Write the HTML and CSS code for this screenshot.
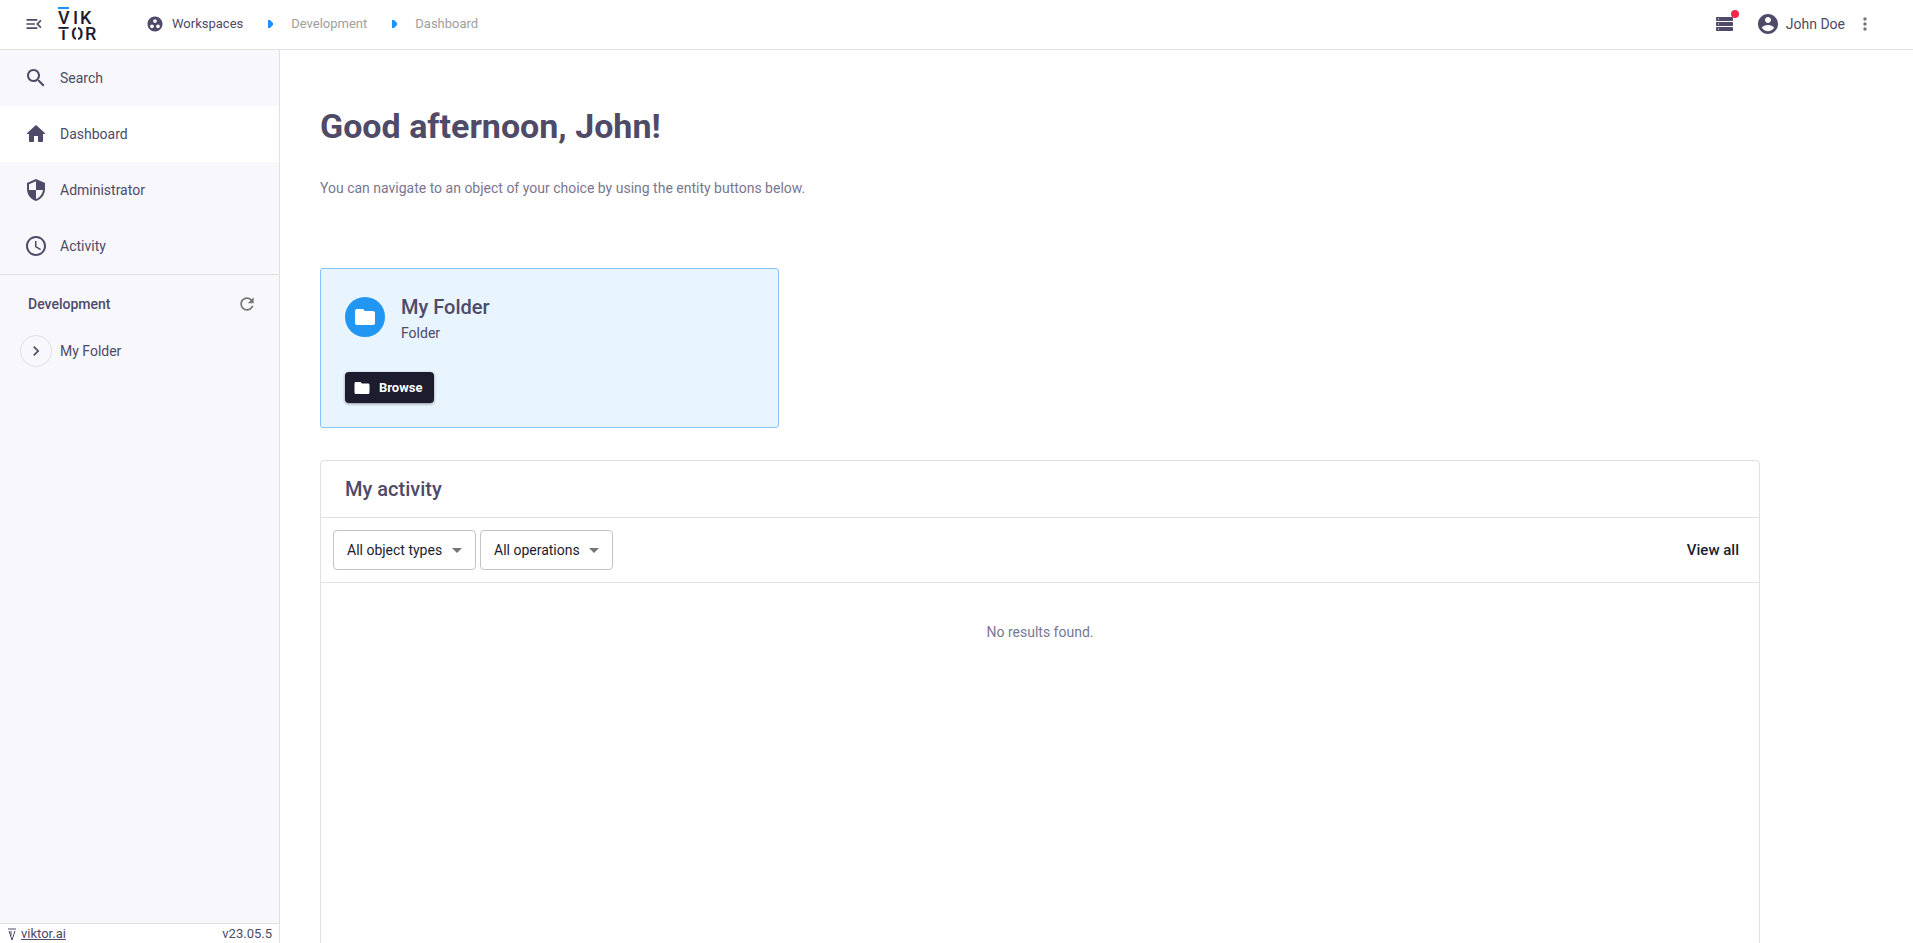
FILE: index.html
```html
<!DOCTYPE html>
<html lang="en">
<head>
  <meta charset="UTF-8">
  <meta name="viewport" content="width=device-width, initial-scale=1">
  <title>Dashboard - VIKTOR</title>
  <link rel="stylesheet" href="styles.css">
</head>
<body>
  <header class="topbar">
    <button type="button" class="icon-button menu-toggle" aria-label="Collapse menu">
      <svg width="20" height="20" viewBox="0 0 24 24"><path d="M3 18h13v-2H3v2zm0-5h10v-2H3v2zm0-7v2h13V6H3zm18 9.59L17.42 12 21 8.41 19.59 7l-5 5 5 5L21 15.59z"/></svg>
    </button>
    <a href="#" class="logo" aria-label="Viktor home">
      <svg width="40" height="36" viewBox="0 0 40 36">
        <rect class="logo-bar" x="0" y="1" width="11" height="2"/>
        <text><tspan x="0 15 22" y="18">VIK</tspan><tspan x="0 13 27" y="34">TOR</tspan></text>
        <path class="logo-cut" d="M0 23h11v1H0zM18 20h2v4h-2zM18 31h2v4h-2z"/>
      </svg>
    </a>
    <nav class="breadcrumbs" aria-label="Breadcrumb">
      <a href="#" class="crumb crumb-root">
        <svg width="18" height="18" viewBox="0 0 24 24"><path d="M12 2C6.48 2 2 6.48 2 12s4.48 10 10 10 10-4.480 10-10S17.520 2 12 2zM8 17.500c-1.380 0-2.500-1.120-2.500-2.500s1.120-2.500 2.500-2.500 2.500 1.120 2.500 2.500-1.120 2.500-2.500 2.500zM9.500 8c0-1.380 1.120-2.500 2.500-2.500s2.500 1.120 2.500 2.500-1.120 2.500-2.500 2.500S9.500 9.380 9.500 8zm6.500 9.500c-1.380 0-2.500-1.120-2.500-2.500s1.120-2.500 2.500-2.500 2.500 1.120 2.500 2.500-1.120 2.500-2.500 2.500z"/></svg>
        Workspaces
      </a>
      <svg class="crumb-arrow" width="6" height="8" viewBox="0 0 6 8"><path d="M0 0h2l3 3v2l-3 3H0z"/></svg>
      <a href="#" class="crumb">Development</a>
      <svg class="crumb-arrow" width="6" height="8" viewBox="0 0 6 8"><path d="M0 0h2l3 3v2l-3 3H0z"/></svg>
      <a href="#" class="crumb">Dashboard</a>
    </nav>
    <div class="user-area">
      <button type="button" class="icon-button jobs" aria-label="Jobs">
        <svg width="18" height="16" viewBox="0 0 18 16">
          <rect x="0" y="1" width="17" height="4" rx="1"/>
          <rect x="0" y="6" width="17" height="4" rx="1"/>
          <rect x="0" y="11" width="17" height="4" rx="1"/>
          <path class="lamp" d="M2 2.500h1v1H2zM2 7.500h1v1H2zM2 12.500h1v1H2z"/>
        </svg>
        <span class="badge"></span>
      </button>
      <button type="button" class="user">
        <svg width="24" height="24" viewBox="0 0 24 24"><path d="M12 2C6.480 2 2 6.480 2 12s4.480 10 10 10 10-4.480 10-10S17.520 2 12 2zm0 3c1.660 0 3 1.340 3 3s-1.340 3-3 3-3-1.340-3-3 1.340-3 3-3zm0 14.200c-2.500 0-4.710-1.280-6-3.220.03-1.990 4-3.080 6-3.080 1.990 0 5.970 1.090 6 3.080-1.290 1.940-3.500 3.220-6 3.220z"/></svg>
        John Doe
      </button>
      <button type="button" class="icon-button more" aria-label="More">
        <svg width="20" height="20" viewBox="0 0 24 24"><path d="M12 8c1.100 0 2-.9 2-2s-.9-2-2-2-2 .9-2 2 .9 2 2 2zm0 2c-1.100 0-2 .9-2 2s.9 2 2 2 2-.9 2-2-.9-2-2-2zm0 6c-1.100 0-2 .9-2 2s.9 2 2 2 2-.9 2-2-.9-2-2-2z"/></svg>
      </button>
    </div>
  </header>

  <div class="layout">
    <aside class="sidebar">
      <nav class="side-nav">
        <a href="#" class="side-link">
          <svg width="24" height="24" viewBox="0 0 24 24"><path d="M15.500 14h-.79l-.28-.27C15.410 12.590 16 11.110 16 9.500 16 5.910 13.090 3 9.500 3S3 5.910 3 9.500 5.910 16 9.500 16c1.610 0 3.090-.59 4.230-1.570l.27.28v.79l5 4.990L20.490 19l-4.990-5zm-6 0C7.010 14 5 11.990 5 9.500S7.010 5 9.500 5 14 7.010 14 9.500 11.990 14 9.500 14z"/></svg>
          Search
        </a>
        <a href="#" class="side-link active">
          <svg width="24" height="24" viewBox="0 0 24 24"><path d="M10 19v-5h4v5c0 .55.45 1 1 1h3c.55 0 1-.45 1-1v-7h1.700c.46 0 .68-.57.33-.87L12.670 3.600c-.38-.34-.96-.34-1.340 0l-8.360 7.530c-.34.300-.13.87.33.87H5v7c0 .55.45 1 1 1h3c.55 0 1-.45 1-1z"/></svg>
          Dashboard
        </a>
        <a href="#" class="side-link">
          <svg width="24" height="24" viewBox="0 0 24 24"><path d="M12 1L3 5v6c0 5.550 3.840 10.740 9 12 5.160-1.260 9-6.450 9-12V5l-9-4zm0 10.990h7c-.53 4.120-3.280 7.790-7 8.940V12H5V6.300l7-3.110v8.800z"/></svg>
          Administrator
        </a>
        <a href="#" class="side-link">
          <svg width="24" height="24" viewBox="0 0 24 24"><path d="M11.990 2C6.470 2 2 6.480 2 12s4.470 10 9.990 10C17.520 22 22 17.520 22 12S17.520 2 11.990 2zM12 20c-4.420 0-8-3.580-8-8s3.580-8 8-8 8 3.580 8 8-3.580 8-8 8zm.5-13H11v6l5.250 3.150.75-1.230-4.500-2.670z"/></svg>
          Activity
        </a>
      </nav>
      <section class="workspace">
        <div class="workspace-head">
          <h2>Development</h2>
          <button type="button" class="icon-button refresh" aria-label="Refresh">
            <svg width="20" height="20" viewBox="0 0 24 24"><path d="M17.650 6.350C16.200 4.900 14.210 4 12 4c-4.420 0-7.990 3.580-7.990 8s3.570 8 7.990 8c3.730 0 6.840-2.550 7.730-6h-2.080c-.82 2.330-3.040 4-5.650 4-3.310 0-6-2.690-6-6s2.690-6 6-6c1.660 0 3.140.69 4.220 1.780L13 11h7V4l-2.350 2.350z"/></svg>
          </button>
        </div>
        <div class="tree-item">
          <button type="button" class="expand" aria-label="Expand My Folder">
            <svg width="20" height="20" viewBox="0 0 24 24"><path d="M10 6L8.590 7.410 13.170 12l-4.580 4.590L10 18l6-6z"/></svg>
          </button>
          <a href="#">My Folder</a>
        </div>
      </section>
      <footer class="side-footer">
        <a href="#">
          <svg width="8" height="14" viewBox="0 0 8 14"><path d="M0 2h8M1 4l3 9 3-9M3 4v5"/></svg>
          <span>viktor.ai</span>
        </a>
        <span>v23.05.5</span>
      </footer>
    </aside>

    <main class="content">
      <h1>Good afternoon, John!</h1>
      <p class="intro">You can navigate to an object of your choice by using the entity buttons below.</p>

      <div class="cards">
        <article class="card">
          <div class="card-head">
            <span class="card-icon">
              <svg width="24" height="24" viewBox="0 0 24 24"><path d="M10 4H4c-1.100 0-1.990.9-1.990 2L2 18c0 1.100.9 2 2 2h16c1.100 0 2-.9 2-2V8c0-1.100-.9-2-2-2h-8l-2-2z"/></svg>
            </span>
            <div>
              <h3>My Folder</h3>
              <p>Folder</p>
            </div>
          </div>
          <button type="button" class="browse">
            <svg width="18" height="18" viewBox="0 0 24 24"><path d="M10 4H4c-1.100 0-1.990.9-1.990 2L2 18c0 1.100.9 2 2 2h16c1.100 0 2-.9 2-2V8c0-1.100-.9-2-2-2h-8l-2-2z"/></svg>
            Browse
          </button>
        </article>
      </div>

      <section class="activity">
        <h2>My activity</h2>
        <div class="filters">
          <div class="select">
            <select aria-label="Object types">
              <option>All object types</option>
            </select>
          </div>
          <div class="select">
            <select aria-label="Operations">
              <option>All operations</option>
            </select>
          </div>
          <a href="#" class="view-all">View all</a>
        </div>
        <p class="empty">No results found.</p>
      </section>
    </main>
  </div>
</body>
</html>
```
FILE: styles.css
```css
* {
  box-sizing: border-box;
}
body {
  margin: 0;
  height: 100vh;
  display: flex;
  flex-direction: column;
  font-family: Roboto, Arial, sans-serif;
  font-size: 14px;
  line-height: 20px;
  color: #4e4a67;
  background-color: #fff;
}
h1, h2, h3, p {
  margin: 0;
}
a {
  color: inherit;
  text-decoration: none;
}
svg {
  display: block;
  flex: none;
  fill: currentColor;
}
button {
  font: inherit;
  color: inherit;
  background: none;
  border: none;
  padding: 0;
  cursor: pointer;
}

/* top bar */
.topbar {
  display: flex;
  align-items: center;
  flex: none;
  height: 50px;
  padding: 0 38px 2px 24px;
  border-bottom: 1px solid #e0e0e0;
}
.logo {
  margin-left: 14px;
}
.logo svg {
  overflow: visible;
}
.logo text {
  font-size: 18px;
  font-weight: 500;
  fill: #1c1c2e;
}
.logo-bar {
  fill: #1e90ff;
}
.logo-cut {
  fill: #fff;
}
.breadcrumbs {
  display: flex;
  align-items: center;
  gap: 17px;
  margin-left: 48px;
  font-size: 13px;
}
.crumb {
  color: #9e9e9e;
}
.crumb-root {
  display: flex;
  align-items: center;
  gap: 8px;
  color: #4e4a67;
}
.crumb-arrow {
  margin-left: 8px;
  fill: #1e90ff;
}
.user-area {
  display: flex;
  align-items: center;
  margin-left: auto;
}
.jobs {
  position: relative;
  margin-right: 22px;
}
.badge {
  position: absolute;
  top: -6px;
  right: -5px;
  width: 8px;
  height: 8px;
  border-radius: 50%;
  background-color: #f0284a;
}
.lamp {
  fill: #fff;
}
.user {
  display: flex;
  align-items: center;
  gap: 6px;
}
.more {
  margin-left: 10px;
  color: #757575;
}

/* sidebar */
.layout {
  display: flex;
  flex: 1;
  min-height: 0;
}
.sidebar {
  display: flex;
  flex-direction: column;
  flex: none;
  width: 280px;
  background-color: #f7f7fc;
  border-right: 1px solid #e0e0e0;
}
.side-nav {
  border-bottom: 1px solid #e0e0e0;
}
.side-link {
  display: flex;
  align-items: center;
  gap: 12px;
  height: 56px;
  padding: 0 24px;
}
.side-link.active {
  background-color: #fff;
}
.workspace {
  flex: 1;
}
.workspace-head {
  display: flex;
  align-items: center;
  justify-content: space-between;
  height: 58px;
  padding: 0 22px 0 28px;
}
.workspace-head h2 {
  font-size: 14px;
  font-weight: 500;
}
.refresh {
  color: #757575;
}
.tree-item {
  display: flex;
  align-items: center;
  gap: 8px;
  margin-top: 2px;
  padding-left: 20px;
}
.expand {
  display: flex;
  align-items: center;
  justify-content: center;
  width: 32px;
  height: 32px;
  border: 1px solid #e0e0e0;
  border-radius: 50%;
}
.side-footer {
  display: flex;
  justify-content: space-between;
  height: 20px;
  padding: 0 7px 0 8px;
  font-size: 13px;
  background-color: #fff;
  border-top: 1px solid #e0e0e0;
}
.side-footer a {
  display: flex;
  align-items: center;
  gap: 5px;
}
.side-footer a span {
  text-decoration: underline;
}
.side-footer path {
  fill: none;
  stroke: currentColor;
}

/* content */
.content {
  flex: 1;
  min-width: 0;
  padding: 52px 40px 40px;
  overflow-y: auto;
  scrollbar-width: none;
}
h1 {
  font-size: 34px;
  font-weight: 700;
  line-height: 48px;
}
.intro {
  margin-top: 28px;
  color: #7a7690;
}
.cards {
  display: grid;
  grid-template-columns: repeat(3, 1fr);
  gap: 32px;
  max-width: 1440px;
  margin-top: 70px;
}
.card {
  height: 160px;
  padding: 24px;
  background-color: #e8f4fe;
  border: 1px solid #84c3fb;
  border-radius: 3px;
}
.card-head {
  display: flex;
  align-items: flex-start;
  gap: 16px;
}
.card-icon {
  display: flex;
  align-items: center;
  justify-content: center;
  width: 40px;
  height: 40px;
  margin-top: 4px;
  border-radius: 50%;
  color: #fff;
  background-color: #2196f3;
}
.card h3 {
  font-size: 20px;
  font-weight: 500;
  line-height: 28px;
}
.card p {
  line-height: 24px;
}
.browse {
  display: flex;
  align-items: center;
  gap: 8px;
  height: 31px;
  margin-top: 27px;
  padding: 0 12px 0 8px;
  border-radius: 4px;
  font-size: 13px;
  font-weight: 700;
  color: #fff;
  background-color: #1c1c2e;
  box-shadow: 0 1px 3px rgba(0, 0, 0, 0.4);
}
.activity {
  max-width: 1440px;
  min-height: 640px;
  margin-top: 32px;
  border: 1px solid #e0e0e0;
  border-radius: 4px;
}
.activity h2 {
  padding: 14px 24px;
  font-size: 20px;
  font-weight: 500;
  line-height: 28px;
  border-bottom: 1px solid #e0e0e0;
}
.filters {
  display: flex;
  align-items: center;
  gap: 4px;
  padding: 12px 20px 12px 12px;
  border-bottom: 1px solid #e0e0e0;
}
.select {
  position: relative;
}
.select::after {
  content: "";
  position: absolute;
  top: 18px;
  right: 14px;
  border: 5px solid transparent;
  border-top-color: #757575;
  border-bottom: none;
  pointer-events: none;
}
.select select {
  appearance: none;
  display: block;
  height: 40px;
  padding: 0 32px 0 13px;
  font: inherit;
  color: #1c1c2e;
  background-color: #fff;
  border: 1px solid #c4c4c4;
  border-radius: 4px;
}
.view-all {
  margin-left: auto;
  font-size: 15px;
  font-weight: 500;
  color: #1c1c2e;
}
.empty {
  padding: 39px 24px;
  text-align: center;
  color: #7a7690;
}
```
